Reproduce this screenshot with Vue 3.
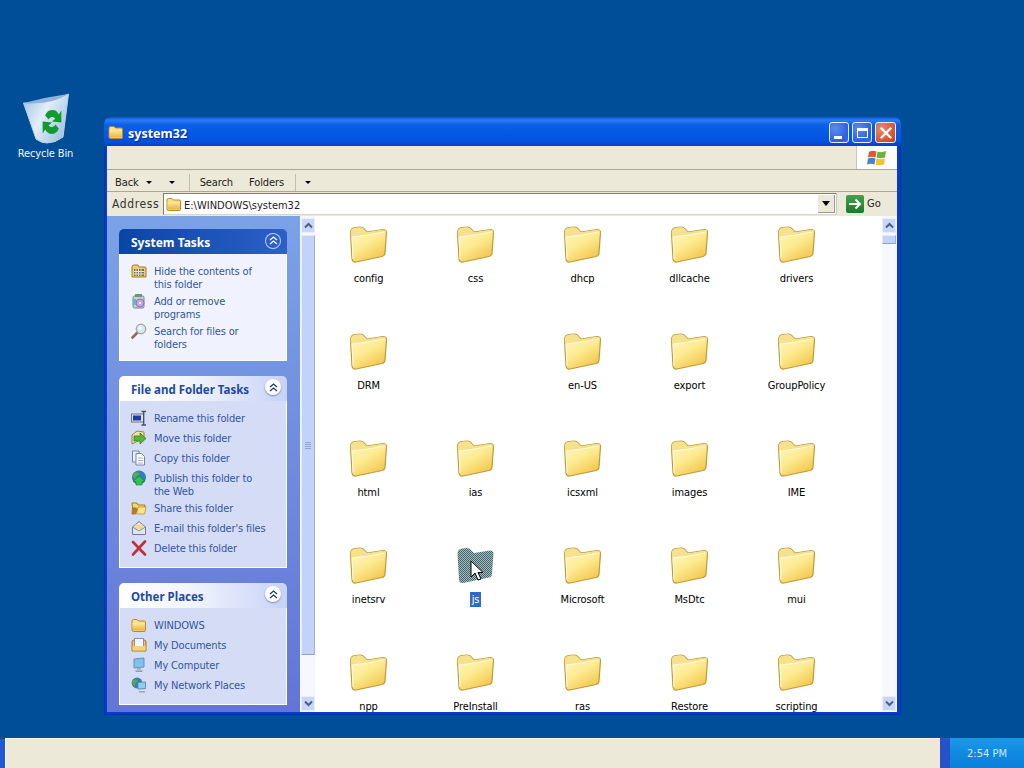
<script setup>
const sections = [
  { title: 'System Tasks', kind: 'primary', items: [
    { icon: 'i-hide', text: 'Hide the contents of this folder' },
    { icon: 'i-add', text: 'Add or remove programs' },
    { icon: 'i-search', text: 'Search for files or folders' },
  ]},
  { title: 'File and Folder Tasks', kind: 'secondary', items: [
    { icon: 'i-rename', text: 'Rename this folder' },
    { icon: 'i-move', text: 'Move this folder' },
    { icon: 'i-copy', text: 'Copy this folder' },
    { icon: 'i-web', text: 'Publish this folder to the Web' },
    { icon: 'i-share', text: 'Share this folder' },
    { icon: 'i-mail', text: "E-mail this folder's files" },
    { icon: 'i-del', text: 'Delete this folder' },
  ]},
  { title: 'Other Places', kind: 'secondary', items: [
    { icon: 'i-folder', text: 'WINDOWS' },
    { icon: 'i-docs', text: 'My Documents' },
    { icon: 'i-pc', text: 'My Computer' },
    { icon: 'i-net', text: 'My Network Places' },
  ]},
]
const folders = [
  'config','css','dhcp','dllcache','drivers',
  'DRM','','en-US','export','GroupPolicy',
  'html','ias','icsxml','images','IME',
  'inetsrv','js','Microsoft','MsDtc','mui',
  'npp','PreInstall','ras','Restore','scripting',
]
const folderPath = 'M4 35 L2.5 9 Q2.5 4 7 3.5 L12 3 Q15 3 17 6 L19 8 L35 5.5 Q38.5 5.5 38.5 8.5 L37 29 Q37 31.5 34 32.5 L8 38 Q4.5 38.5 4 35Z'
const folderBack = 'M3 13 L2.7 9 Q2.7 4.2 7 3.8 L12 3.3 Q15 3.3 17 6.2 L19 8.3 L35 5.8 Q38.2 5.8 38.2 8.5 L20 11 Z'
</script>

<template>
  <div class="desktop">
    <svg class="defs" width="0" height="0" aria-hidden="true">
      <defs>
        <linearGradient id="fy" x1="0" y1="0" x2="0.6" y2="1">
          <stop offset="0" stop-color="#fff9c8"/><stop offset="0.55" stop-color="#fdeb92"/><stop offset="1" stop-color="#f3c850"/>
        </linearGradient>
        <linearGradient id="fy2" x1="0" y1="0" x2="0" y2="1">
          <stop offset="0" stop-color="#ffe9a0"/><stop offset="1" stop-color="#e5b53e"/>
        </linearGradient>
        <pattern id="dith" width="2" height="2" patternUnits="userSpaceOnUse">
          <rect width="2" height="2" fill="#a8bcb4"/>
          <rect width="1" height="1" fill="#3f6478"/><rect x="1" y="1" width="1" height="1" fill="#3f6478"/>
        </pattern>
        <linearGradient id="bin" x1="0" y1="0" x2="1" y2="0.6">
          <stop offset="0" stop-color="#9fc0e2"/><stop offset="0.5" stop-color="#e2eef9"/><stop offset="1" stop-color="#a6c4e4"/>
        </linearGradient>

        <symbol id="i-folder" viewBox="0 0 16 16">
          <path d="M1 4 Q1 2.5 2.5 2.5 H6 L7.5 4 H13 Q14.5 4 14.5 5 V13.5 Q14.5 14.5 13 14.5 H2.5 Q1 14.5 1 13 Z" fill="#fbe08a" stroke="#b98a22"/>
          <path d="M1.5 6 H14 V13.5 H2 Z" fill="url(#fy2)"/>
        </symbol>
        <symbol id="i-hide" viewBox="0 0 16 16">
          <path d="M1 4 Q1 2 3 2 H7 L8 4 H14 Q15 4 15 5 V14 H1 Z" fill="#f3cd6d" stroke="#a37c25"/>
          <rect x="3" y="6" width="10" height="7" fill="#6f6f5a"/>
          <path d="M5 6V13M7.5 6V13M10 6V13M3 8.5H13M3 11H13" stroke="#e8e6d8" stroke-width="1"/>
        </symbol>
        <symbol id="i-add" viewBox="0 0 16 16">
          <rect x="2" y="3" width="11" height="12" rx="1.5" fill="#c8cfd6" stroke="#7a8593"/>
          <rect x="4" y="1" width="7" height="3" fill="#5aa36a"/>
          <circle cx="9" cy="10" r="4" fill="#c7a7e0" stroke="#8d74b0"/>
          <circle cx="9" cy="10" r="1" fill="#fff"/>
          <rect x="2" y="6" width="3" height="6" fill="#60b7c9"/>
        </symbol>
        <symbol id="i-search" viewBox="0 0 16 16">
          <path d="M6 10 L1.5 14.5" stroke="#8a6d52" stroke-width="2.6" stroke-linecap="round"/>
          <circle cx="10" cy="6" r="4.7" fill="#d5ecf8" stroke="#a9a9a0" stroke-width="1.4"/>
          <circle cx="9" cy="5" r="1.6" fill="#fff"/>
        </symbol>
        <symbol id="i-rename" viewBox="0 0 16 16">
          <rect x="0.5" y="4" width="12" height="8" fill="#dfe3ea" stroke="#6d7484"/>
          <rect x="2" y="5.5" width="8" height="5" fill="#1b39a8"/>
          <path d="M10.5 1.5H15M10.5 15H15M12.7 1.5V15" stroke="#4a4f5c" stroke-width="1.3" fill="none"/>
        </symbol>
        <symbol id="i-move" viewBox="0 0 16 16">
          <path d="M1 5 L6 1 L13 2 V8 L1 14Z" fill="#efe2a6" stroke="#8c8a4b"/>
          <path d="M3 6 H9 V3 L15 8.5 L9 14 V11 H3Z" fill="#5cb531" stroke="#2e7a1a" stroke-width="0.7"/>
        </symbol>
        <symbol id="i-copy" viewBox="0 0 16 16">
          <path d="M1.5 1 H8 V12 H1.5Z" fill="#eaf0f8" stroke="#7088a8"/>
          <path d="M5 3.5 H10.5 L13.5 6.5 V15 H5Z" fill="#fff" stroke="#6f86a6"/>
          <path d="M7 8H12M7 10.5H12M7 13H12" stroke="#9fb0c8"/>
        </symbol>
        <symbol id="i-web" viewBox="0 0 16 16">
          <circle cx="8" cy="7.5" r="7" fill="#2f7fb8"/>
          <path d="M3 3 Q7 1 9 4 Q5 6 4 9 Q1 7 3 3Z" fill="#4fb04d"/>
          <path d="M8 6 L14 11.5 H11 V15 H5 V11.5 H2Z" fill="#38c04a" stroke="#1c8030" stroke-width="0.6"/>
        </symbol>
        <symbol id="i-share" viewBox="0 0 16 16">
          <path d="M1 3 H6 L7 5 H14 L13 11 H2Z" fill="#f8d768" stroke="#a17c20"/>
          <path d="M1 8 Q4 6 7 9 L5 14 Q2 15 0.5 14Z" fill="#b07a2f"/>
          <path d="M7 7 H15 L13.5 14 H5.5Z" fill="#ffe580" stroke="#a17c20" stroke-width="0.6"/>
        </symbol>
        <symbol id="i-mail" viewBox="0 0 16 16">
          <path d="M1.5 7 L8 1.5 L14.5 7 V14.5 H1.5Z" fill="#dfe6f4" stroke="#6b7da3"/>
          <path d="M4 4.5 H12 V9 H4Z" fill="#f5d88a"/>
          <path d="M1.5 7 L8 11 L14.5 7" fill="none" stroke="#7f90b2"/>
        </symbol>
        <symbol id="i-del" viewBox="0 0 16 16">
          <path d="M2 2 L14 14.5M14 1.5 L2 14.5" stroke="#c22f3a" stroke-width="2.6" stroke-linecap="round"/>
        </symbol>
        <symbol id="i-docs" viewBox="0 0 16 16">
          <path d="M1 5 Q1 3 3 3 H13 Q15 3 15 5 V14 H1Z" fill="#f2c35b" stroke="#a3771c"/>
          <rect x="3.5" y="1.5" width="9" height="10" fill="#f2f5fb" stroke="#8494b0"/>
          <path d="M1.5 9 H14.5 V13.5 H1.5Z" fill="#f5d27a"/>
        </symbol>
        <symbol id="i-pc" viewBox="0 0 16 16">
          <path d="M3 2 L13 1 V10 L3 11Z" fill="#7fc2ef" stroke="#6a8fb5"/>
          <path d="M6 11 L10 10.5 V13 H6Z" fill="#a6b4c2"/>
          <path d="M4 13.5 H12 L11 15 H5Z" fill="#8b9aaa"/>
        </symbol>
        <symbol id="i-net" viewBox="0 0 16 16">
          <circle cx="6" cy="6" r="5.4" fill="#2d7fb8"/>
          <path d="M2 3 Q6 1 7 4 Q3 7 4 10 Q0 7 2 3Z" fill="#54a84f"/>
          <path d="M7 5.5 L14.5 5 V11.5 L7 12Z" fill="#8fcdf1" stroke="#6a8fb5"/>
          <path d="M8 14 H14 V15.5 H8Z" fill="#9aa8b6"/>
        </symbol>
      </defs>
    </svg>

    <div class="desk-area">
      <div class="bin">
        <svg class="bin-img" viewBox="0 0 48 52" width="48" height="52">
          <path d="M1.5 10 Q24 12 46.5 1 L41 44 Q33 50 25 50 Q19 50 14 46 Z" fill="url(#bin)" stroke="#b8d0ea"/>
          <path d="M2 10 Q24 4 46 1 Q30 12 2 10Z" fill="#8fb3da"/>
          <g transform="translate(30 29) scale(0.85 1) translate(-26 -26.5)">
            <path d="M18 20 A9 9 0 0 1 34 19 L37 15 L37 27 L26 26 L30 23 A5 5 0 0 0 22 24Z" fill="#0f9b2e"/>
            <path d="M34 33 A9 9 0 0 1 18 34 L15 38 L15 26 L26 27 L22 30 A5 5 0 0 0 30 29Z" fill="#0f9b2e"/>
          </g>
        </svg>
        <span class="bin-label">Recycle Bin</span>
      </div>

      <div class="window">
        <div class="titlebar">
          <svg class="title-icon" width="16" height="16"><use href="#i-folder"/></svg>
          <span class="title-text">system32</span>
          <div class="title-btns">
            <span class="tbtn"><i class="g-min"></i></span>
            <span class="tbtn"><i class="g-max"></i></span>
            <span class="tbtn close">
              <svg width="14" height="14" viewBox="0 0 14 14"><path d="M2.5 2.5 L11.5 11.5M11.5 2.5 L2.5 11.5" stroke="#fff" stroke-width="2.2" stroke-linecap="square"/></svg>
            </span>
          </div>
        </div>

        <div class="client">
          <div class="menubar">
            <div class="logo">
              <svg width="20" height="18" viewBox="0 0 20 18">
                <path d="M2 3 Q5 1 9.5 2.5 L8.5 8.5 Q5 7 1 8.5Z" fill="#e4572e"/>
                <path d="M10.5 2.5 Q14 4 19 2 L18 8.5 Q13.5 10 9.5 8.5Z" fill="#6fb03a"/>
                <path d="M1 9.5 Q5 8 8.5 9.5 L7.5 15.5 Q3.5 14 0 15.5Z" fill="#4a7fd0"/>
                <path d="M9.5 9.5 Q13.5 11 18 9.5 L17 15.5 Q12 17 8.5 15.5Z" fill="#f2c331"/>
              </svg>
            </div>
          </div>

          <div class="toolbar">
            <span class="tool back">Back</span>
            <i class="caret c1"></i>
            <i class="caret c2"></i>
            <span class="sep s1"></span>
            <span class="tool search">Search</span>
            <span class="tool folders">Folders</span>
            <span class="sep s2"></span>
            <i class="caret c3"></i>
          </div>

          <div class="addressbar">
            <span class="addr-label">Address</span>
            <div class="addr-box">
              <svg width="16" height="16"><use href="#i-folder"/></svg>
              <span class="addr-text">E:\WINDOWS\system32</span>
              <span class="addr-drop"><i class="drop-caret"></i></span>
            </div>
            <span class="go-btn">
              <svg width="14" height="14" viewBox="0 0 14 14"><path d="M1 7 H12M7.5 2.5 L12 7 L7.5 11.5" fill="none" stroke="#fff" stroke-width="2"/></svg>
            </span>
            <span class="go-text">Go</span>
          </div>

          <div class="content">
            <aside class="sidebar">
              <section v-for="s in sections" :key="s.title" class="box" :class="s.kind">
                <header class="box-head">
                  <span class="box-title">{{ s.title }}</span>
                  <span class="chev">
                    <svg width="9" height="9" viewBox="0 0 9 9"><path d="M1 4 L4.5 1 L8 4M1 8 L4.5 5 L8 8" fill="none" stroke="currentColor" stroke-width="1.3"/></svg>
                  </span>
                </header>
                <div class="box-body">
                  <a v-for="it in s.items" :key="it.text" class="task">
                    <svg class="task-icon" width="16" height="16"><use :href="'#' + it.icon"/></svg>
                    <span class="task-text">{{ it.text }}</span>
                  </a>
                </div>
              </section>
            </aside>

            <div class="scrollbar side-sb">
              <span class="sb-btn"><svg width="9" height="7" viewBox="0 0 9 7"><path d="M1 5.5 L4.5 2 L8 5.5" fill="none" stroke="#4d6185" stroke-width="2"/></svg></span>
              <span class="sb-thumb long"><i class="grip"></i></span>
              <span class="sb-track"></span>
              <span class="sb-btn"><svg width="9" height="7" viewBox="0 0 9 7"><path d="M1 1.5 L4.5 5 L8 1.5" fill="none" stroke="#4d6185" stroke-width="2"/></svg></span>
            </div>

            <main class="filelist">
              <div v-for="(f, i) in folders" :key="i" class="file" :class="{ sel: f === 'js' }">
                <template v-if="f">
                  <svg class="folder" width="40" height="40" viewBox="1 0 40 40">
                    <template v-if="f === 'js'">
                      <path :d="folderPath" fill="url(#dith)"/>
                    </template>
                    <template v-else>
                      <path :d="folderPath" fill="url(#fy)" stroke="#bd9a3a" stroke-width="1.2"/>
                      <path :d="folderBack" fill="#f6e28e"/>
                      <path d="M5 35 L4 13 Q12 12 20 11 L36.5 8" fill="none" stroke="#fffbe0" stroke-width="1"/>
                    </template>
                  </svg>
                  <span class="file-label">{{ f }}</span>
                  <svg v-if="f === 'js'" class="cursor" width="14" height="22" viewBox="0 0 14 22">
                    <path d="M1 1 V17 L5 13 L8 20 L11 19 L8 12.5 H13Z" fill="#fff" stroke="#000" stroke-width="1"/>
                  </svg>
                </template>
              </div>
            </main>

            <div class="scrollbar main-sb">
              <span class="sb-btn"><svg width="9" height="7" viewBox="0 0 9 7"><path d="M1 5.5 L4.5 2 L8 5.5" fill="none" stroke="#4d6185" stroke-width="2"/></svg></span>
              <span class="sb-thumb short"></span>
              <span class="sb-track"></span>
              <span class="sb-btn"><svg width="9" height="7" viewBox="0 0 9 7"><path d="M1 1.5 L4.5 5 L8 1.5" fill="none" stroke="#4d6185" stroke-width="2"/></svg></span>
            </div>
          </div>
        </div>
      </div>
    </div>

    <footer class="taskbar">
      <span class="tb-start"></span>
      <span class="tb-main"></span>
      <span class="tb-strip"></span>
      <span class="tb-clock">2:54 PM</span>
    </footer>
  </div>
</template>

<style>
html, body { margin: 0; background: #004e98; }
</style>

<style scoped>
.desktop {
  width: 1024px; height: 768px; overflow: hidden; position: relative;
  background: #004e98; display: flex; flex-direction: column;
  font-family: "DejaVu Sans Condensed", "DejaVu Sans", sans-serif;
  font-stretch: condensed; font-size: 11px;
}
.defs { position: absolute; }
.desk-area { flex: 1; position: relative; }

.bin { position: absolute; left: 0; top: 93px; width: 91px; display: flex; flex-direction: column; align-items: center; }
.bin-img { display: block; }
.bin-label { color: #f0f6fc; line-height: 13px; margin-top: 2px; letter-spacing: -0.15px; }

.window {
  position: absolute; left: 104px; top: 117px; width: 797px; height: 598px;
  border-radius: 7px 7px 0 0; display: flex; flex-direction: column;
  background: #0a3ccc; box-shadow: inset 0 0 0 1px #0a2fb8;
}
.titlebar {
  height: 29px; flex: none; display: flex; align-items: center; padding: 0 5px 0 4px;
  border-radius: 7px 7px 0 0;
  background: linear-gradient(180deg, #0a4fd0 0, #2a7df2 3px, #0c5fe6 8px, #0458e4 18px, #0450dc 25px, #0340c4 29px);
}
.title-icon { margin-right: 4px; flex: none; }
.title-text { color: #fff; font: bold 12.5px "Noto Sans", "Open Sans", sans-serif; text-shadow: 1px 1px 1px #0a2a80; margin-top: 3px; }
.title-btns { margin-left: auto; display: flex; gap: 3px; margin-top: 2px; }
.tbtn {
  width: 20px; height: 21px; box-sizing: border-box; border: 1px solid #e6eefc; border-radius: 3px; position: relative;
  background: radial-gradient(circle at 30% 30%, #5a8cf0, #2d5ee0 70%, #3c6ee8);
  display: flex; align-items: center; justify-content: center;
}
.tbtn.close { width: 21px; background: radial-gradient(circle at 30% 30%, #e88a70, #d8512f 70%, #c43a20); }
.g-min { position: absolute; left: 4px; bottom: 3px; width: 8px; height: 3px; background: #fff; }
.g-max { width: 11px; height: 10px; border: 1px solid #fff; border-top-width: 3px; box-sizing: border-box; }

.client {
  flex: 1; margin: 0 4px 3px 3px; display: flex; flex-direction: column;
  min-height: 0; background: #ece9d8; color: #000;
}
.menubar { height: 24px; flex: none; display: flex; justify-content: flex-end; border-bottom: 1px solid #a9a797; box-sizing: border-box; background: #ece9d8; }
.logo { width: 41px; background: #fff; border-left: 1px solid #c8c6b6; display: flex; align-items: center; justify-content: center; box-sizing: border-box; }

.toolbar {
  height: 22px; flex: none; position: relative; display: flex; align-items: center;
  border-bottom: 1px solid #a9a797; box-sizing: border-box; padding: 3px 0 0 8px;
}
.tool { line-height: 13px; letter-spacing: -0.1px; color: #222; }
.search { margin-left: 25px; }
.folders { margin-left: 16px; }
.caret { display: inline-block; width: 0; height: 0; border: 3px solid transparent; border-top: 3px solid #000; border-bottom: 0; }
.c1 { margin-left: 7px; }
.c2 { margin-left: 17px; }
.sep { width: 1px; height: 17px; background: #c2bfac; }
.s1 { position: absolute; left: 82px; }
.s2 { position: absolute; left: 188px; }
.c3 { position: absolute; left: 198px; }

.addressbar { height: 24px; flex: none; display: flex; align-items: center; box-sizing: border-box; padding: 0 0 1px 5px; }
.addr-label { width: 51px; font-size: 12px; letter-spacing: 0.6px; color: #333; }
.addr-box {
  width: 674px; height: 22px; box-sizing: border-box; background: #fff; display: flex; align-items: center;
  padding-left: 2px; border: 1px solid #8a8878; border-color: #807e6e #c8c6b6 #d8d6c6 #807e6e;
}
.addr-text { margin-left: 2px; margin-top: 3px; color: #222; }
.addr-drop {
  margin-left: auto; margin-right: 1px; width: 16px; height: 17px; background: #ece9d8;
  border-right: 1px solid #999; border-bottom: 1px solid #999; display: flex; align-items: center; justify-content: center;
}
.drop-caret { width: 0; height: 0; border: 4px solid transparent; border-top: 5px solid #000; border-bottom: 0; }
.go-btn {
  margin-left: 9px; width: 18px; height: 18px; border-radius: 2px;
  background: linear-gradient(180deg, #3fa34d, #1d7a2c);
  display: flex; align-items: center; justify-content: center;
}
.go-text { margin-left: 3px; color: #222; }

.content { flex: 1; min-height: 0; display: flex; background: #fff; }
.sidebar {
  width: 193px; flex: none; box-sizing: border-box; padding: 13px 13px 0 12px; overflow: hidden;
  display: flex; flex-direction: column; gap: 15px;
  background: linear-gradient(180deg, #7ba2e7, #6375d6);
}
.box { flex: none; }
.box-head {
  height: 25px; box-sizing: border-box; display: flex; align-items: center; justify-content: space-between;
  padding: 1px 6px 0 12px; border-radius: 5px 5px 0 0;
  background: linear-gradient(90deg, #ffffff 0, #f4f6fd 40%, #c6d3f7 100%);
  color: #1f4a9e;
}
.primary .box-head { background: linear-gradient(90deg, #0a45a5, #2c60c8); color: #fff; }
.box-title { font: bold 11.5px "Noto Sans", "Open Sans", sans-serif; line-height: 15px; white-space: nowrap; }
.primary .box-title { font-size: 12px; }
.chev {
  width: 16px; height: 16px; border-radius: 50%; background: #fff; color: #1a3a7a; flex: none;
  display: flex; align-items: center; justify-content: center; box-shadow: 0 1px 2px #7b8ac0; margin-top: -4px;
}
.primary .chev { background: #2c60c8; color: #fff; box-shadow: inset 0 0 0 1px #bcd0f5; margin-top: -3px; }
.box-body {
  background: #d5dcf5; border: 1px solid #fff; border-top: 0; box-sizing: border-box;
  display: flex; flex-direction: column; gap: 4px; padding: 9px 18px 11px 11px;
}
.primary .box-body { background: #f0f3fd; padding: 9px 18px 11px 11px; }
.task { display: flex; align-items: flex-start; min-height: 16px; color: #33569f; gap: 7px; line-height: 13px; letter-spacing: -0.15px; }
.task-text { margin: 2px 0 -2px; }
.task-icon { flex: none; }

.scrollbar { width: 15px; flex: none; display: flex; flex-direction: column; padding: 2px 0 1px 0; box-sizing: border-box; gap: 2px; background: #f6f8fd; }
.sb-btn {
  height: 15px; width: 14px; flex: none; background: #c9d6f8; border: 1px solid #e8eefc; box-sizing: border-box;
  display: flex; align-items: center; justify-content: center;
}
.side-sb .sb-btn, .side-sb .sb-thumb { margin-left: 1px; }
.sb-thumb { width: 14px; flex: none; background: #c2d2f8; border: 1px solid #e4eafa; border-bottom-color: #8fa3cf; border-right-color: #9fb3da; box-sizing: border-box; display: flex; align-items: center; justify-content: center; }
.long { height: 420px; }
.short { height: 9px; }
.sb-track { flex: 1; }
.grip { width: 6px; height: 7px; background: repeating-linear-gradient(180deg, #8ea6d4 0 1px, transparent 1px 2px); }

.filelist {
  flex: 1; min-width: 0; overflow: hidden; display: grid; grid-template-columns: repeat(5, 107px);
  grid-auto-rows: 107px; padding-top: 8px; align-content: start;
}
.file { display: flex; flex-direction: column; align-items: center; position: relative; }
.folder { display: block; }
.file-label { margin-top: 7px; line-height: 15px; color: #000; padding: 0 2px; letter-spacing: -0.1px; }
.sel .file-label { background: #316ac5; color: #fff; }
.cursor { position: absolute; left: 48px; top: 15px; }

.taskbar { height: 30px; flex: none; display: flex; }
.tb-start { width: 5px; background: #2058d8; margin-top: 1px; }
.tb-main { flex: 1; background: #ece9d8; border-left: 1px solid #fff; border-top: 1px solid #f6f5ec; box-sizing: border-box; }
.tb-strip { width: 10px; background: #2552c8; }
.tb-clock {
  width: 74px; color: #cfeaff; display: flex; align-items: center; justify-content: center; font-size: 11px;
  background: linear-gradient(180deg, #1a9ae8 0, #0f8ae2 50%, #0b80da 100%);
}
</style>
